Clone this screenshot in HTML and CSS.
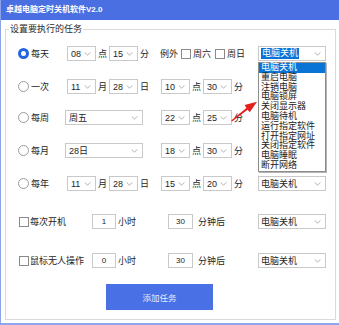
FILE: index.html
```html
<!DOCTYPE html>
<html lang="zh-CN">
<head>
<meta charset="utf-8">
<title>卓越电脑定时关机软件V2.0</title>
<link rel="stylesheet" href="styles.css">
</head>
<body>
<div class="window">
  <div class="titlebar">卓越电脑定时关机软件V2.0</div>
  <fieldset class="group">
    <legend>设置要执行的任务</legend>

    <div class="row r1">
      <div class="lead"><span class="radio on"></span><span>每天</span></div>
      <div class="date">
        <div class="sel sm"><span>08</span><svg class="chev" viewBox="0 0 8 5"><path d="M0.5 0.5L4 4L7.5 0.5"/></svg></div>
        <span class="t">点</span>
        <div class="sel sm"><span>15</span><svg class="chev" viewBox="0 0 8 5"><path d="M0.5 0.5L4 4L7.5 0.5"/></svg></div>
        <span class="t">分</span>
      </div>
      <div class="exc">
        <span>例外</span>
        <span class="cb"></span><span class="cbl">周六</span>
        <span class="cb cb2"></span><span class="cbl">周日</span>
      </div>
      <div class="sel act"><span class="hl">电脑关机</span><svg class="chev" viewBox="0 0 8 5"><path d="M0.5 0.5L4 4L7.5 0.5"/></svg></div>
    </div>

    <div class="row r2">
      <div class="lead"><span class="radio"></span><span>一次</span></div>
      <div class="date">
        <div class="sel sm"><span>11</span><svg class="chev" viewBox="0 0 8 5"><path d="M0.5 0.5L4 4L7.5 0.5"/></svg></div>
        <span class="t">月</span>
        <div class="sel sm"><span>28</span><svg class="chev" viewBox="0 0 8 5"><path d="M0.5 0.5L4 4L7.5 0.5"/></svg></div>
        <span class="t">日</span>
      </div>
      <div class="time">
        <div class="sel sm"><span>10</span><svg class="chev" viewBox="0 0 8 5"><path d="M0.5 0.5L4 4L7.5 0.5"/></svg></div>
        <span class="t">点</span>
        <div class="sel sm"><span>30</span><svg class="chev" viewBox="0 0 8 5"><path d="M0.5 0.5L4 4L7.5 0.5"/></svg></div>
        <span class="t">分</span>
      </div>
    </div>

    <div class="row r3">
      <div class="lead"><span class="radio"></span><span>每周</span></div>
      <div class="date">
        <div class="sel wide"><span>周五</span><svg class="chev" viewBox="0 0 8 5"><path d="M0.5 0.5L4 4L7.5 0.5"/></svg></div>
      </div>
      <div class="time">
        <div class="sel sm"><span>22</span><svg class="chev" viewBox="0 0 8 5"><path d="M0.5 0.5L4 4L7.5 0.5"/></svg></div>
        <span class="t">点</span>
        <div class="sel sm"><span>25</span><svg class="chev" viewBox="0 0 8 5"><path d="M0.5 0.5L4 4L7.5 0.5"/></svg></div>
        <span class="t">分</span>
      </div>
    </div>

    <div class="row r4">
      <div class="lead"><span class="radio"></span><span>每月</span></div>
      <div class="date">
        <div class="sel wide"><span>28日</span><svg class="chev" viewBox="0 0 8 5"><path d="M0.5 0.5L4 4L7.5 0.5"/></svg></div>
      </div>
      <div class="time">
        <div class="sel sm"><span>18</span><svg class="chev" viewBox="0 0 8 5"><path d="M0.5 0.5L4 4L7.5 0.5"/></svg></div>
        <span class="t">点</span>
        <div class="sel sm"><span>30</span><svg class="chev" viewBox="0 0 8 5"><path d="M0.5 0.5L4 4L7.5 0.5"/></svg></div>
        <span class="t">分</span>
      </div>
    </div>

    <div class="row r5">
      <div class="lead"><span class="radio"></span><span>每年</span></div>
      <div class="date">
        <div class="sel sm"><span>11</span><svg class="chev" viewBox="0 0 8 5"><path d="M0.5 0.5L4 4L7.5 0.5"/></svg></div>
        <span class="t">月</span>
        <div class="sel sm"><span>28</span><svg class="chev" viewBox="0 0 8 5"><path d="M0.5 0.5L4 4L7.5 0.5"/></svg></div>
        <span class="t">日</span>
      </div>
      <div class="time">
        <div class="sel sm"><span>15</span><svg class="chev" viewBox="0 0 8 5"><path d="M0.5 0.5L4 4L7.5 0.5"/></svg></div>
        <span class="t">点</span>
        <div class="sel sm"><span>20</span><svg class="chev" viewBox="0 0 8 5"><path d="M0.5 0.5L4 4L7.5 0.5"/></svg></div>
        <span class="t">分</span>
      </div>
      <div class="sel act"><span>电脑关机</span><svg class="chev" viewBox="0 0 8 5"><path d="M0.5 0.5L4 4L7.5 0.5"/></svg></div>
    </div>

    <div class="row r6">
      <div class="lead2"><span class="cb"></span><span>每次开机</span></div>
      <div class="hrs"><span class="num">1</span><span>小时</span></div>
      <div class="mins"><span class="num n2">30</span><span>分钟后</span></div>
      <div class="sel act"><span>电脑关机</span><svg class="chev" viewBox="0 0 8 5"><path d="M0.5 0.5L4 4L7.5 0.5"/></svg></div>
    </div>

    <div class="row r7">
      <div class="lead2"><span class="cb"></span><span>鼠标无人操作</span></div>
      <div class="hrs"><span class="num">0</span><span>小时</span></div>
      <div class="mins"><span class="num n2">30</span><span>分钟后</span></div>
      <div class="sel act"><span>电脑关机</span><svg class="chev" viewBox="0 0 8 5"><path d="M0.5 0.5L4 4L7.5 0.5"/></svg></div>
    </div>

    <div class="actions"><button class="btn">添加任务</button></div>
  </fieldset>

  <div class="dropdown">
    <div class="item on">电脑关机</div>
    <div class="item">重启电脑</div>
    <div class="item">注销电脑</div>
    <div class="item">电脑锁屏</div>
    <div class="item">关闭显示器</div>
    <div class="item">电脑待机</div>
    <div class="item">运行指定软件</div>
    <div class="item">打开指定网址</div>
    <div class="item">关闭指定软件</div>
    <div class="item">电脑睡眠</div>
    <div class="item">断开网络</div>
  </div>

  <svg class="arrow" viewBox="225 95 40 30" width="40" height="30">
    <polygon points="231.2,120.6 246.4,108.1 244.6,104.9 257,101.7 249.8,112.3 247.6,109.7 232,121.6" fill="#e3201b"/>
  </svg>
</div>
</body>
</html>
```

FILE: styles.css
```css
html, body {
  margin: 0;
  padding: 0;
  background: #ffffff;
}

.window {
  position: relative;
  width: 339px;
  height: 325px;
  box-sizing: border-box;
  border-left: 1px solid #8aa3ea;
  border-bottom: 2px solid #8ea6ec;
  overflow: hidden;
  font-family: "Liberation Sans", "Noto Sans CJK SC", sans-serif;
  font-size: 9px;
  color: #1e1e1e;
  background: #ffffff;
}

.titlebar {
  height: 20px;
  line-height: 20px;
  padding-left: 5px;
  background: #4a6fe2;
  color: #ffffff;
  font-weight: bold;
  font-size: 8px;
}

.group {
  box-sizing: border-box;
  width: 331px;
  height: 297px;
  margin: 3px 0 0 4px;
  padding: 0 9px 0 12px;
  border: 1px solid #dadada;
  min-width: 0;
}

.group legend {
  margin-left: -9px;
  padding: 0 1px;
  font-size: 9px;
  line-height: 12px;
  color: #2a2a2a;
}

.row {
  display: flex;
  align-items: center;
  height: 15px;
}

.r1 { margin-top: 11px; }
.r2 { margin-top: 18px; }
.r3 { margin-top: 16px; }
.r4 { margin-top: 18px; }
.r5 { margin-top: 18px; }
.r6 { margin-top: 23px; }
.r7 { margin-top: 24px; }

.lead {
  width: 49px;
  flex: none;
  display: flex;
  align-items: center;
  gap: 2px;
}

.lead2 {
  width: 74px;
  flex: none;
  display: flex;
  align-items: center;
  gap: 1px;
  padding-left: 1px;
  box-sizing: border-box;
}

.date {
  width: 94px;
  flex: none;
  display: flex;
  align-items: center;
  gap: 2px;
}

.time {
  display: flex;
  align-items: center;
  gap: 2px;
}

.exc {
  display: flex;
  align-items: center;
  margin-left: -1px;
}

.exc .cb {
  margin-left: 3px;
}

.exc .cb2 {
  margin-left: 4px;
}

.cbl {
  margin-left: 2px;
}

.radio {
  width: 11px;
  height: 11px;
  box-sizing: border-box;
  border-radius: 50%;
  border: 1px solid #9c9c9c;
  background: #ffffff;
  flex: none;
}

.radio.on {
  border: 3px solid #2466df;
}

.cb {
  width: 10px;
  height: 10px;
  box-sizing: border-box;
  border: 1px solid #8a8a8a;
  background: #ffffff;
  flex: none;
}

.sel {
  position: relative;
  display: flex;
  align-items: center;
  height: 15px;
  box-sizing: border-box;
  border: 1px solid #c9c9c9;
  background: #ffffff;
  padding-left: 3px;
  flex: none;
}

.sel.sm { width: 29px; }
.sel.wide { width: 78px; margin-left: -2px; }
.sel.act { width: 68px; margin-left: auto; padding-left: 2px; }

.chev {
  position: absolute;
  right: 4px;
  top: 5px;
  width: 7px;
  height: 4px;
}

.chev path {
  fill: none;
  stroke: #9a9a9a;
  stroke-width: 1;
}

.hl {
  background: #0a74d6;
  color: #ffffff;
  line-height: 11px;
  padding: 0 1px;
}

.hrs {
  width: 76px;
  flex: none;
  display: flex;
  align-items: center;
  gap: 2px;
}

.mins {
  display: flex;
  align-items: center;
  gap: 5px;
}

.num {
  width: 24px;
  height: 15px;
  box-sizing: border-box;
  border: 1px solid #c9c9c9;
  background: #ffffff;
  font-size: 8px;
  line-height: 13px;
  text-align: center;
}

.num.n2 { width: 25px; }

.actions {
  margin-top: 16px;
  padding-left: 88px;
}

.btn {
  display: block;
  width: 107px;
  height: 26px;
  border: none;
  background: #4a70e6;
  color: #e6ecfd;
  font-family: "Liberation Sans", "Noto Sans CJK SC", sans-serif;
  font-size: 8.5px;
  padding: 0;
}

.dropdown {
  position: absolute;
  left: 257px;
  top: 62px;
  width: 68px;
  box-sizing: border-box;
  border: 1px solid #8c8c8c;
  background: #ffffff;
  box-shadow: 1px 1px 0 #b4b4b4;
  padding: 0;
}

.item {
  height: 9.8px;
  line-height: 9.8px;
  padding-left: 2px;
  font-size: 9px;
  color: #1a1a1a;
  white-space: nowrap;
}

.item.on {
  background: #0a74d6;
  color: #ffffff;
}

.arrow {
  position: absolute;
  left: 224px;
  top: 95px;
}
```
